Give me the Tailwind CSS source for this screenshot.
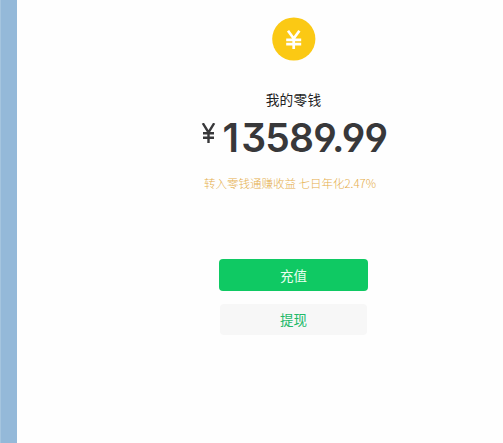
<!DOCTYPE html>
<html lang="zh-CN">
<head>
<meta charset="utf-8">
<title>我的零钱</title>
<script src="https://cdn.jsdelivr.net/npm/@tailwindcss/browser@4"></script>
</head>
<body class="flex h-[443px] w-[503px] overflow-hidden bg-[#fefefe] font-['Noto_Sans_CJK_SC',sans-serif]">
<aside class="w-[17px] shrink-0 border-l border-[#a5c5df] bg-[#94b9d9]"></aside>
<main class="flex flex-1 flex-col items-center pl-[67px] pt-[17px]">
  <svg class="h-11 w-11 shrink-0" viewBox="0 0 44 44" fill="none">
    <circle cx="21.8" cy="22" r="21.6" fill="#fbc914"/>
    <path d="M16 13.8L21.7 21.5L27.4 13.8M21.7 21.5V32M14.2 22.8H29.2M14.2 27.2H29.2" stroke="#fff" stroke-width="2.7"/>
  </svg>
  <h1 class="mt-[28px] h-5 text-[13.7px] leading-5 tracking-[0.2px] text-[#222]">我的零钱</h1>
  <div class="mt-[8px] flex h-[42px] w-[186px] items-start text-[#38383a]">
    <svg class="mt-[6px] h-5 w-4 shrink-0" viewBox="0 0 16 20" fill="none" stroke="currentColor" stroke-width="2.4">
      <path d="M1.8 .2L7.5 9.5L13.2 .2M7.5 9V20M2 10.2H13M2 14.8H13"/>
    </svg>
    <p class="ml-[6px] whitespace-nowrap font-['Inter',sans-serif] text-[39px] font-semibold leading-[42px] tracking-[-0.8px] [font-feature-settings:'cv04','cv09','ss01']"><span class="mr-[3px]">1</span>3589.99</p>
  </div>
  <p class="mr-[7px] mt-[14px] h-5 whitespace-nowrap text-[11.5px] font-light leading-5 text-[#e5ae4c]">转入零钱通赚收益 七日年化2.47%</p>
  <button class="mt-[66px] h-8 w-[149px] shrink-0 rounded-[4px] bg-[#0fc963] text-[13.5px] leading-[31px] text-[#e8fff0]">充值</button>
  <button class="mt-[13px] h-[31px] w-[147px] shrink-0 rounded-[4px] bg-[#f7f7f7] text-[13.5px] leading-[31px] text-[#22b968]">提现</button>
</main>
</body>
</html>
